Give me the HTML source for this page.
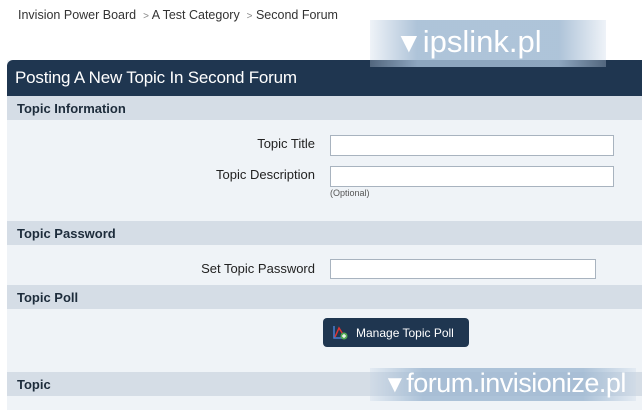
<!DOCTYPE html>
<html><head><style>
*{margin:0;padding:0;box-sizing:border-box}
body{width:642px;height:402px;overflow:hidden;background:#fff;font-family:"Liberation Sans",Arial,sans-serif;position:relative}
.abs{position:absolute}
.bc{left:18px;top:8px;font-size:12.5px;color:#333}
.bc span{color:#888;font-size:10px}
.main{left:7px;top:60px;width:640px;height:350px;background:#eff3f7}
.hd{left:7px;top:60px;width:640px;height:36px;background:#1f3650;border-radius:6px 0 0 0;color:#fff;font-size:17px;padding:8px 0 0 8px;letter-spacing:-0.2px}
.bar{left:7px;width:640px;height:24px;background:#d5dde6;font-weight:bold;font-size:13px;color:#1d2c3b;padding:5px 0 0 10px}
.lbl{font-size:13px;color:#222;right:327px;text-align:right}
.in{background:#fff;border:1px solid #a8b3bf;left:330px}
.opt{left:330px;top:188px;font-size:9px;color:#555}
.btn{left:323px;top:318px;width:146px;height:29px;background:#1f3650;border-radius:4px;color:#fff;font-size:12px;padding:8px 0 0 33px}
.wm{background:linear-gradient(90deg,rgba(200,215,232,.3),rgba(160,185,210,.85) 20%,rgba(160,185,210,.85) 80%,rgba(200,215,232,.3));color:#fff}
</style></head><body>
<div class="abs bc">Invision Power Board &nbsp;<span>&gt;</span> A Test Category &nbsp;<span>&gt;</span> Second Forum</div>
<div class="abs main"></div>
<div class="abs hd">Posting A New Topic In Second Forum</div>
<div class="abs bar" style="top:96px">Topic Information</div>
<div class="abs lbl" style="top:136px">Topic Title</div>
<div class="abs in" style="top:135px;width:284px;height:21px"></div>
<div class="abs lbl" style="top:167px">Topic Description</div>
<div class="abs in" style="top:166px;width:284px;height:21px"></div>
<div class="abs opt">(Optional)</div>
<div class="abs bar" style="top:221px">Topic Password</div>
<div class="abs lbl" style="top:261px">Set Topic Password</div>
<div class="abs in" style="top:259px;width:266px;height:20px"></div>
<div class="abs bar" style="top:285px">Topic Poll</div>
<div class="abs btn"><svg class="abs" style="left:10px;top:7px" width="15" height="15" viewBox="0 0 15 15"><path d="M1 1V13H13" stroke="#4a7bd0" stroke-width="1.5" fill="none"/><path d="M2 12L6 3L11 11" stroke="#d33" stroke-width="1.5" fill="none"/><circle cx="11" cy="11" r="3.5" fill="#5a5"/><path d="M11 9V13M9 11H13" stroke="#fff" stroke-width="1.2"/></svg>Manage Topic Poll</div>
<div class="abs bar" style="top:372px">Topic</div>
<div class="abs wm" style="left:370px;top:20px;width:236px;height:47px;padding:4px 0 0 25px;font-size:31px"><span style="font-size:28px">&#9660;</span>ipslink.pl</div>
<div class="abs wm" style="left:370px;top:368px;width:266px;height:33px;padding:0 0 0 13px;font-size:27px;letter-spacing:-0.5px"><span style="font-size:24px">&#9660;</span>forum.invisionize.pl</div>
</body></html>
